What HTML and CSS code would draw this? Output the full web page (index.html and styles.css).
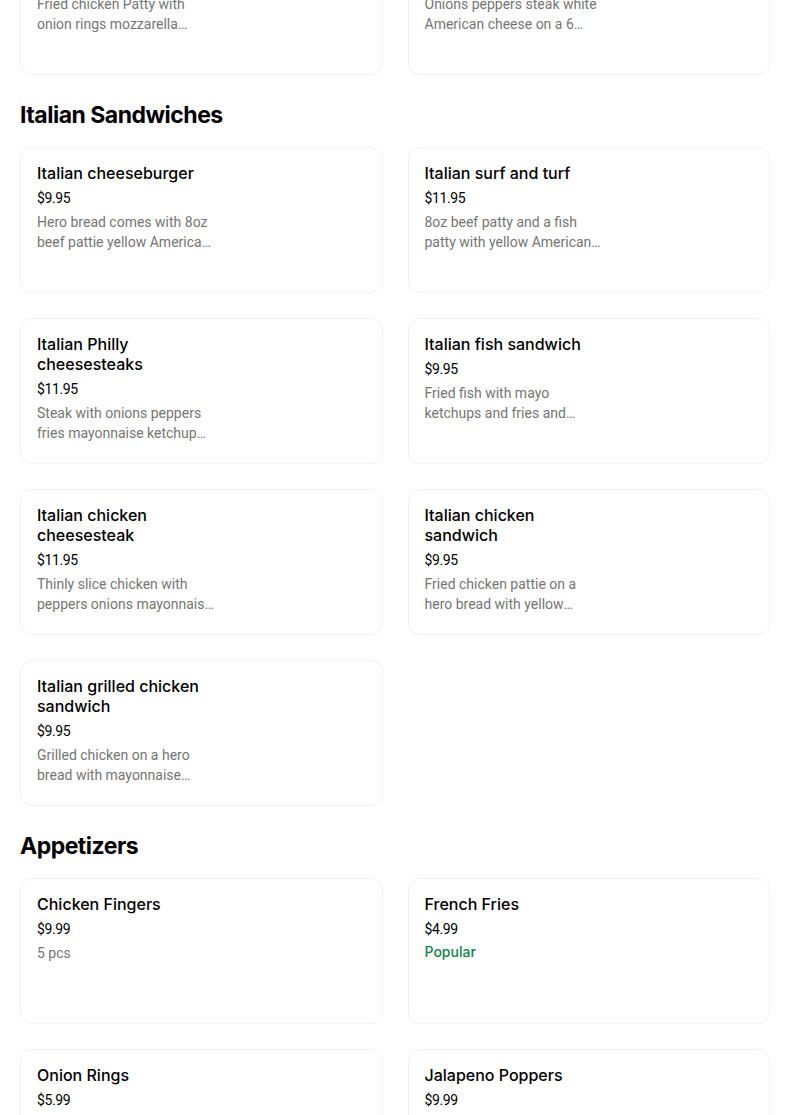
FILE: index.html
```html
<!DOCTYPE html>
<html lang="en">
<head>
    <meta charset="UTF-8">
    <meta name="viewport" content="width=device-width, initial-scale=1.0">
    <title>Menu</title>
    <link rel="stylesheet" href="styles.css">
</head>
<body>
    <div class="menu">
        <div class="grid">
            <div class="card">
                <div class="item-name">Italian chicken supreme</div>
                <div class="item-price">$10.95</div>
                <div class="item-desc">Fried chicken Patty with onion rings mozzarella cheese and marinara sauce on a hero</div>
            </div>
            <div class="card">
                <div class="item-name">Italian steak sandwich</div>
                <div class="item-price">$10.95</div>
                <div class="item-desc">Onions peppers steak white American cheese on a 6 inch hero bread</div>
            </div>
        </div>

        <h2 class="section-title">Italian Sandwiches</h2>
        <div class="grid">
            <div class="card">
                <div class="item-name">Italian cheeseburger</div>
                <div class="item-price">$9.95</div>
                <div class="item-desc">Hero bread comes with 8oz beef pattie yellow American cheese lettuce tomato</div>
            </div>
            <div class="card">
                <div class="item-name">Italian surf and turf</div>
                <div class="item-price">$11.95</div>
                <div class="item-desc">8oz beef patty and a fish patty with yellow American cheese on a hero</div>
            </div>
            <div class="card">
                <div class="item-name">Italian Philly cheesesteaks</div>
                <div class="item-price">$11.95</div>
                <div class="item-desc">Steak with onions peppers fries mayonnaise ketchup and white American cheese</div>
            </div>
            <div class="card">
                <div class="item-name">Italian fish sandwich</div>
                <div class="item-price">$9.95</div>
                <div class="item-desc">Fried fish with mayo ketchups and fries and lettuce on a hero</div>
            </div>
            <div class="card">
                <div class="item-name">Italian chicken cheesesteak</div>
                <div class="item-price">$11.95</div>
                <div class="item-desc">Thinly slice chicken with peppers onions mayonnaise ketchup and fries</div>
            </div>
            <div class="card">
                <div class="item-name">Italian chicken sandwich</div>
                <div class="item-price">$9.95</div>
                <div class="item-desc">Fried chicken pattie on a hero bread with yellow American cheese and fries</div>
            </div>
            <div class="card">
                <div class="item-name">Italian grilled chicken sandwich</div>
                <div class="item-price">$9.95</div>
                <div class="item-desc">Grilled chicken on a hero bread with mayonnaise lettuce tomato and fries</div>
            </div>
        </div>

        <h2 class="section-title">Appetizers</h2>
        <div class="grid">
            <div class="card">
                <div class="item-name">Chicken Fingers</div>
                <div class="item-price">$9.99</div>
                <div class="item-desc">5 pcs</div>
            </div>
            <div class="card">
                <div class="item-name">French Fries</div>
                <div class="item-price">$4.99</div>
                <div class="item-tag">Popular</div>
            </div>
            <div class="card">
                <div class="item-name">Onion Rings</div>
                <div class="item-price">$5.99</div>
            </div>
            <div class="card">
                <div class="item-name">Jalapeno Poppers</div>
                <div class="item-price">$9.99</div>
            </div>
        </div>
    </div>
</body>
</html>
```

FILE: styles.css
```css
body {
    margin: 0;
    padding: 0;
    background-color: #ffffff;
    font-family: Inter, "Noto Sans", Arial, sans-serif;
    color: #000000;
    overflow: hidden;
}
.menu {
    width: 750px;
    margin: -71px 0 0 20px; /* la pagina ya esta desplazada */
}
.grid {
    display: grid;
    grid-template-columns: 1fr 1fr;
    gap: 25px;
}
.section-title {
    margin: 24px 0 16px;
    font-size: 23px;
    line-height: 32px;
    font-weight: 700;
    letter-spacing: -0.5px;
}
.card {
    box-sizing: border-box;
    height: 146px;
    padding: 15px 16px;
    border: 1px solid #f2f2f2;
    border-radius: 12px;
    background: #ffffff;
}
.item-name {
    width: 182px;
    font-size: 16px;
    line-height: 20px;
    font-weight: 500;
}
.item-price {
    margin-top: 5px;
    font-family: Roboto, Arial, sans-serif;
    font-size: 14px;
    line-height: 20px;
    letter-spacing: -0.4px;
}
.item-desc {
    width: 178px;
    margin-top: 4px;
    font-family: Roboto, Arial, sans-serif;
    font-size: 14px;
    line-height: 20px;
    color: #757575;
    display: -webkit-box;
    -webkit-line-clamp: 2;
    -webkit-box-orient: vertical;
    overflow: hidden;
}
.item-tag {
    margin-top: 3px;
    font-size: 14px;
    line-height: 20px;
    font-weight: 500;
    color: #0e8345;
}
```
